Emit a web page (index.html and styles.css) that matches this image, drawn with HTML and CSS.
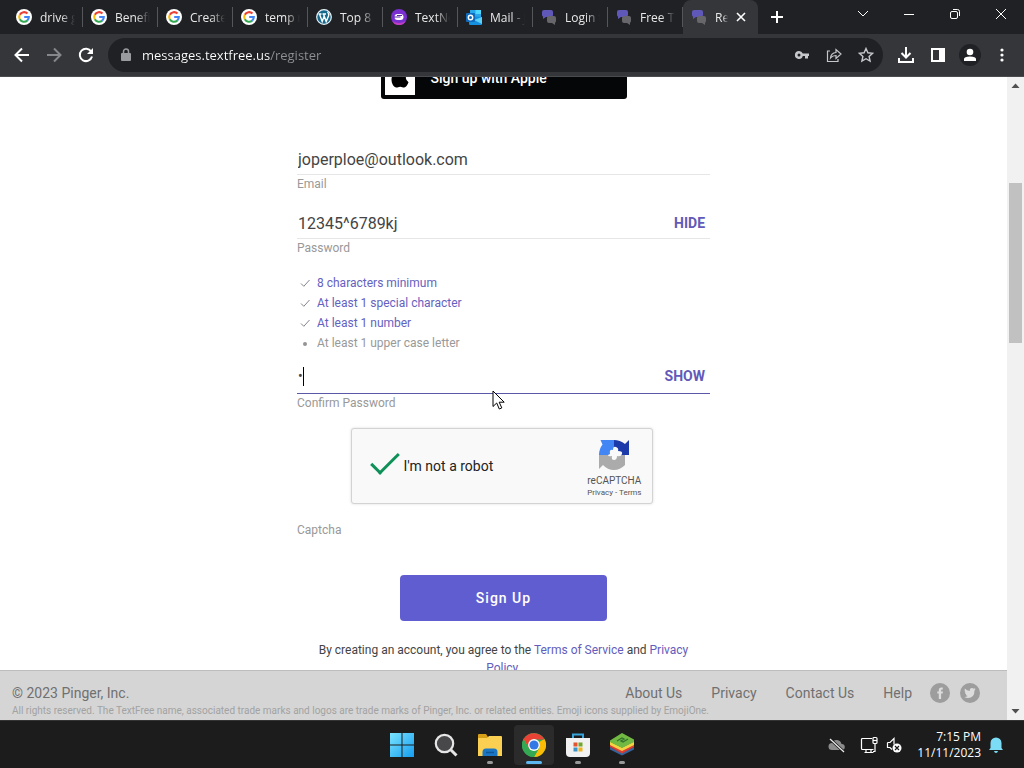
FILE: index.html
```html
<!DOCTYPE html>
<html lang="en">
<head>
  <meta charset="utf-8">
  <title>Register - TextFree</title>
  <link rel="stylesheet" href="styles.css">
</head>
<body>
<svg class="defs" aria-hidden="true">
  <symbol id="google" viewBox="0 0 16 16">
    <circle cx="8" cy="8" r="8" fill="#fff"/>
    <g fill="none" stroke-width="2.1">
      <path d="M11.5 4.6A4.8 4.8 0 0 0 3.8 5.7" stroke="#ea4335"/>
      <path d="M3.8 5.7a4.8 4.8 0 0 0 0 4.6" stroke="#fbbc05"/>
      <path d="M3.8 10.3a4.8 4.8 0 0 0 7.4 1.3" stroke="#34a853"/>
      <path d="M11.2 11.6A4.8 4.8 0 0 0 12.800 8H8.200" stroke="#4285f4"/>
    </g>
  </symbol>
  <symbol id="chat" viewBox="0 0 16 16">
    <path d="M3 1h7a2 2 0 0 1 2 2v3a2 2 0 0 1-2 2H5l-3 2V7.500A2 2 0 0 1 1 6V3a2 2 0 0 1 2-2z" fill="#6058b8"/>
    <path d="M8 7h5a2 2 0 0 1 2 2v3a2 2 0 0 1-1 1.700V16l-3-2H8a2 2 0 0 1-2-2V9a2 2 0 0 1 2-2z" fill="#67676b"/>
  </symbol>
</svg>

<header class="browser">
  <div class="tabs">
    <div class="tab"><svg><use href="#google"/></svg><span>drive google</span></div>
    <div class="tab"><svg><use href="#google"/></svg><span>Benefits of</span></div>
    <div class="tab"><svg><use href="#google"/></svg><span>Create a</span></div>
    <div class="tab"><svg><use href="#google"/></svg><span>temp mail</span></div>
    <div class="tab">
      <svg viewBox="0 0 16 16">
        <circle cx="8" cy="8" r="7.300" fill="#16688c" stroke="#e8f4fa" stroke-width="1.200"/>
        <path d="M2.500 5h3M3.500 5l2.700 7.500L8.200 7M6.500 5h3.500M7.500 5l2.700 7.500L12.500 7q.8-2.500-1-4" fill="none" stroke="#fff" stroke-width="1.400"/>
      </svg>
      <span>Top 8 Sites</span>
    </div>
    <div class="tab">
      <svg viewBox="0 0 16 16">
        <circle cx="8" cy="8" r="8" fill="#7a2fd0"/>
        <path d="M1 12a8 8 0 0 0 14 0Q8 16 1 12z" fill="#c03fc0"/>
        <rect x="3.500" y="5" width="9" height="6" rx="3" fill="#fff"/>
        <path d="M2.500 8h7M6 6.500h5" stroke="#5a23a8"/>
      </svg>
      <span>TextNow</span>
    </div>
    <div class="tab">
      <svg viewBox="0 0 16 16">
        <path d="M4 1h11v7H4z" fill="#28a8ea"/>
        <path d="M9.500 1H15v4H9.500z" fill="#50d9ff"/>
        <path d="M3 7l13 1v7a1 1 0 0 1-1 1H4a1 1 0 0 1-1-1z" fill="#1490df"/>
        <path d="M16 8v7L8 11z" fill="#5bd0f8"/>
        <rect y="4" width="9" height="9" rx="1" fill="#0f6cbd"/>
        <circle cx="4.500" cy="8.500" r="2.200" fill="none" stroke="#fff" stroke-width="1.400"/>
      </svg>
      <span>Mail - Joe</span>
    </div>
    <div class="tab"><svg><use href="#chat"/></svg><span>Login to</span></div>
    <div class="tab"><svg><use href="#chat"/></svg><span>Free Texting</span></div>
    <div class="tab active">
      <svg><use href="#chat"/></svg><span>Register</span>
      <button class="close" aria-label="Close tab"><svg viewBox="0 0 10 10"><path d="M1 1l8 8M9 1l-8 8" stroke="#fff" stroke-width="1.600"/></svg></button>
    </div>
    <button class="new-tab" aria-label="New tab"><svg viewBox="0 0 12 12"><path d="M6 0v12M0 6h12" stroke="#fff" stroke-width="2"/></svg></button>
    <div class="window-controls">
      <button aria-label="Search tabs"><svg viewBox="0 0 12 12"><path d="M1 3l5 5 5-5"/></svg></button>
      <button aria-label="Minimize"><svg viewBox="0 0 12 12"><path d="M1 6.500h10"/></svg></button>
      <button aria-label="Restore"><svg viewBox="0 0 12 12"><rect x="1.500" y="3.500" width="7" height="7" rx="1.500"/><path d="M4 1.500h4.500a2 2 0 0 1 2 2V8"/></svg></button>
      <button aria-label="Close"><svg viewBox="0 0 12 12"><path d="M1 1l10 10M11 1L1 11"/></svg></button>
    </div>
  </div>

  <div class="toolbar">
    <button aria-label="Back"><svg viewBox="0 0 16 16"><path d="M15 8H2M8 1.500L1.500 8 8 14.500" fill="none" stroke="#fff" stroke-width="2"/></svg></button>
    <button aria-label="Forward"><svg viewBox="0 0 16 16"><path d="M1 8h13M8 1.500L14.500 8 8 14.500" fill="none" stroke="#86878a" stroke-width="2"/></svg></button>
    <button aria-label="Reload"><svg viewBox="0 0 16 16"><path d="M13.200 4.500A6.200 6.200 0 1 0 14 9.500" fill="none" stroke="#fff" stroke-width="2"/><path d="M15 1v6H9z" fill="#fff"/></svg></button>
    <div class="omnibox">
      <svg class="lock" viewBox="0 0 10 14"><rect y="5" width="10" height="8" rx="1" fill="#9a9b9e"/><path d="M2.500 5V3.500a2.500 2.500 0 0 1 5 0V5" fill="none" stroke="#9a9b9e" stroke-width="1.500"/></svg>
      <input type="text" aria-label="Address" value="messages.textfree.us/register">
      <button aria-label="Passwords"><svg viewBox="0 0 16 16"><path d="M5 4a4 4 0 1 0 3.800 5H11v2.500h3V9h1V6.500H8.800A4 4 0 0 0 5 4zm0 2.500a1.400 1.400 0 1 1 0 3 1.400 1.400 0 0 1 0-3z" fill="#c6c7ca" fill-rule="evenodd"/></svg></button>
      <button aria-label="Share"><svg viewBox="0 0 16 16"><path d="M4 4H1.500v10.500H12V12M4.500 11q.5-5 5.500-5.500V2.500l5 4.500-5 4.500V8.500Q6.500 8.500 4.500 11z" fill="none" stroke="#c6c7ca" stroke-width="1.200"/></svg></button>
      <button aria-label="Bookmark"><svg viewBox="0 0 16 16"><path d="M8 1.500l1.900 4.300 4.700.5-3.500 3.200 1 4.600L8 11.700l-4.100 2.400 1-4.600L1.400 6.300l4.700-.5z" fill="none" stroke="#c6c7ca" stroke-width="1.400"/></svg></button>
    </div>
    <button aria-label="Downloads"><svg viewBox="0 0 16 16"><path d="M8 0v10M3.500 6L8 10.500 12.500 6M1 11v4h14v-4" fill="none" stroke="#fff" stroke-width="2"/></svg></button>
    <button aria-label="Side panel"><svg viewBox="0 0 16 16"><path d="M1 1h14v14H1zM3 3v10h6V3z" fill="#fff" fill-rule="evenodd"/></svg></button>
    <button class="avatar" aria-label="Profile"><svg viewBox="0 0 22 22"><circle cx="11" cy="11" r="11" fill="#202124"/><circle cx="11" cy="8" r="3.300" fill="#fff"/><path d="M5 17v-2q0-2.500 6-2.500t6 2.500v2z" fill="#fff"/></svg></button>
    <button aria-label="Menu"><svg viewBox="0 0 16 16" fill="#fff"><circle cx="8" cy="3" r="1.600"/><circle cx="8" cy="8" r="1.600"/><circle cx="8" cy="13" r="1.600"/></svg></button>
  </div>
</header>

<div class="viewport">
  <div class="site">
    <main>
      <form class="register">
        <button type="button" class="apple">
          <span class="apple-logo"><svg viewBox="0 0 18 20"><path d="M12.500 0q.2 3-3.500 4.500Q9 1.200 12.500 0zM9 5.800c1 0 2-1 4-.9q2.500.2 3.800 2-4.300 3.200.7 7.300-1.800 5-4.300 5.300c-1.600 0-2.200-.8-4-.8s-2.400.8-3.800.8C2.800 19.500.5 15.500.5 11.500S3 5 5.500 4.900c1.500 0 2.500.9 3.500.9z"/></svg></span>
          Sign up with Apple
        </button>

        <div class="field">
          <input type="email" id="email" value="joperploe@outlook.com">
          <label for="email">Email</label>
        </div>

        <div class="field">
          <div class="row">
            <input type="text" id="password" value="12345^6789kj">
            <button type="button" class="toggle">HIDE</button>
          </div>
          <label for="password">Password</label>
        </div>

        <ul class="rules">
          <li class="ok"><svg viewBox="0 0 10 10"><path d="M1 5.500l2.800 2.800L9.500 2"/></svg>8 characters minimum</li>
          <li class="ok"><svg viewBox="0 0 10 10"><path d="M1 5.500l2.800 2.800L9.500 2"/></svg>At least 1 special character</li>
          <li class="ok"><svg viewBox="0 0 10 10"><path d="M1 5.500l2.800 2.800L9.500 2"/></svg>At least 1 number</li>
          <li><svg viewBox="0 0 10 10"><circle cx="5" cy="6" r="2"/></svg>At least 1 upper case letter</li>
        </ul>

        <div class="field focused">
          <div class="row">
            <input type="password" id="confirm" value="1">
            <span class="caret"></span>
            <button type="button" class="toggle">SHOW</button>
          </div>
          <label for="confirm">Confirm Password</label>
          <svg class="pointer" viewBox="0 0 13 20"><path d="M1 1v15.500l3.700-3.500 2.600 6 2.500-1.100-2.600-5.700h5z" fill="#fff" stroke="#000"/></svg>
        </div>

        <div class="captcha">
          <input type="checkbox" id="robot" checked>
          <label for="robot">I'm not a robot</label>
          <div class="captcha-brand">
            <svg viewBox="0 0 32 32">
              <path d="M31 1v15H16V1q6 0 11 4z" fill="#1c3aa9"/>
              <path d="M16 1v15H1q0-6 3.500-10.500L2.500 1z" fill="#4285f4"/>
              <path d="M1 16h26v10q-5 5-11 5-6.500 0-11-5l-4 4z" fill="#ababab"/>
              <path d="M12 15q-1-5 3-4 0-4 3-3t2 4q5 0 4 3t-5 2q0 4-3 4t-2-4q-4 1-4-1z" fill="#f9f9f9"/>
            </svg>
            <span>reCAPTCHA</span>
            <small><a href="#">Privacy</a> - <a href="#">Terms</a></small>
          </div>
        </div>
        <label class="captcha-label" for="robot">Captcha</label>

        <button type="submit" class="submit">Sign Up</button>
        <p class="terms">By creating an account, you agree to the <a href="#">Terms of Service</a> and <a href="#">Privacy Policy</a>.</p>
      </form>
    </main>

    <footer>
      <div class="footer-row">
        <span>© 2023 Pinger, Inc.</span>
        <nav>
          <a href="#">About Us</a>
          <a href="#">Privacy</a>
          <a href="#">Contact Us</a>
          <a href="#">Help</a>
        </nav>
        <div class="social">
          <a href="#" aria-label="Facebook"><svg viewBox="0 0 20 20"><circle cx="10" cy="10" r="10" fill="#9d9d9d"/><path d="M12.800 4.500h-1.500Q8.800 4.500 8.800 7v1.500H7.300v2h1.500v5.500h2.300v-5.500h1.600l.3-2h-1.900V7.300q0-.8.800-.8h.9z" fill="#dcdcdc"/></svg></a>
          <a href="#" aria-label="Twitter"><svg viewBox="0 0 20 20"><circle cx="10" cy="10" r="10" fill="#9d9d9d"/><path d="M4.800 5.500q2 2.300 5 2.500Q9.500 5 12 5q1 0 1.800.7l1.600-.6-.9 1.400 1.200-.2-1.200 1.300Q14.500 15 8 15q-2 0-3.600-1 1.800.1 3.300-1-1.600-.2-2-1.500h.8q-1.700-.6-1.700-2.200l.9.300Q4 8 4.800 5.500z" fill="#dcdcdc"/></svg></a>
        </div>
      </div>
      <p>All rights reserved. The TextFree name, associated trade marks and logos are trade marks of Pinger, Inc. or related entities. Emoji icons supplied by EmojiOne.</p>
    </footer>
  </div>

  <div class="scrollbar">
    <svg viewBox="0 0 17 17"><path d="M4.500 11h8l-4-4.500z"/></svg>
    <div class="track"><div class="thumb"></div></div>
    <svg viewBox="0 0 17 17"><path d="M4.500 6h8l-4 4.500z"/></svg>
  </div>
</div>

<div class="taskbar">
  <div class="apps">
    <button aria-label="Start"><svg viewBox="0 0 24 24"><defs><linearGradient id="win" x2="1" y2="1"><stop stop-color="#7be4ff"/><stop offset="1" stop-color="#159df0"/></linearGradient></defs><path d="M0 0h11.500v11.500H0zM12.500 0H24v11.500H12.500zM0 12.500h11.500V24H0zM12.500 12.500H24V24H12.500z" fill="url(#win)"/></svg></button>
    <button aria-label="Search"><svg viewBox="0 0 24 24"><circle cx="10.500" cy="10.500" r="8.700" fill="#48484a" stroke="#e6e6e6" stroke-width="2.200"/><path d="M17 17l5.500 5.500" stroke="#e6e6e6" stroke-width="3"/></svg></button>
    <button class="running" aria-label="File Explorer"><svg viewBox="0 0 24 24"><path d="M0 2a1 1 0 0 1 1-1h7l2 3v4H0z" fill="#d79f17"/><path d="M0 5h9l2-2h12a1 1 0 0 1 1 1v19H0z" fill="#fbd052"/><path d="M4.500 23v-4a3.500 3.500 0 0 1 3.500-3.500h8a3.500 3.500 0 0 1 3.500 3.500v4z" fill="#1a76c4"/><path d="M8 19.500h8" stroke="#0d5595" stroke-width="1.500"/></svg></button>
    <button class="running current" aria-label="Chrome"><svg viewBox="0 0 24 24"><circle cx="12" cy="12" r="12" fill="#34a853"/><path d="M1.600 6L7 15.200 12 12 22.400 6A12 12 0 0 1 12 24l5-9 .4-6z" fill="#fbbc05"/><path d="M1.600 6A12 12 0 0 0 12 24l5.200-9-5.200-3-5 2.500z" fill="#34a853"/><path d="M1.600 6A12 12 0 0 1 22.400 6.500H12L7 14.800z" fill="#ea4335"/><circle cx="12" cy="12" r="5.900" fill="#fff"/><circle cx="12" cy="12" r="4.600" fill="#3478e5"/></svg></button>
    <button class="running" aria-label="Microsoft Store"><svg viewBox="0 0 24 24"><path d="M7 6V1.500h10V6" fill="none" stroke="#35a5dc" stroke-width="2"/><path d="M0 5h24v15a4 4 0 0 1-4 4H4a4 4 0 0 1-4-4z" fill="#f1f1f1"/><path d="M7.500 9.500h4v4h-4z" fill="#e2532f"/><path d="M12.500 9.500h4v4h-4z" fill="#72a62c"/><path d="M7.500 14.500h4v4h-4z" fill="#3a92c8"/><path d="M12.500 14.500h4v4h-4z" fill="#efb420"/></svg></button>
    <button class="running" aria-label="BlueStacks"><svg viewBox="0 0 24 24"><path d="M0 14l12 6 12-6v2.500l-12 6-12-6z" fill="#35649c"/><path d="M0 11l12 6 12-6v3l-12 6.500L0 14z" fill="#dc4034"/><path d="M0 8.500l12 6 12-6V12l-12 6-12-6z" fill="#f2d443"/><path d="M0 7.500L12 0l12 6.500v2.500l-12 6-12-6z" fill="#72b944"/><path d="M7 8l5-3 2 1-3 2 2 1 5-3" fill="none" stroke="#33702c" stroke-width="1.300"/></svg></button>
  </div>
  <div class="tray">
    <svg viewBox="0 0 18 18"><path d="M4 14a3.500 3.500 0 0 1 0-7 5 5 0 0 1 9.500 1A3 3 0 0 1 14 14z" fill="#8c8c8c"/><path d="M2 3l14 13" stroke="#1c1c1c" stroke-width="3"/><path d="M2 3l14 13" stroke="#eee" stroke-width="1.200"/></svg>
    <svg class="network" viewBox="0 0 18 18" fill="none" stroke="#fff" stroke-width="1.200"><path d="M12 2.500H2.500a1 1 0 0 0-1 1v9a1 1 0 0 0 1 1h11M4.500 16.500h9M6 14v2.500M11 14v2.500M15 7.500v8H13"/><rect x="13" y="1.500" width="4" height="6" rx="1"/><path d="M13 4.500h4"/></svg>
    <svg viewBox="0 0 18 18"><path d="M2.500 6.500h2.500l4-4v6M2.500 6.500v5h2.500l2 2" fill="none" stroke="#fff" stroke-width="1.200"/><circle cx="12" cy="12" r="4.500" fill="#fff"/><path d="M10 10l4 4M14 10l-4 4" stroke="#1c1c1c" stroke-width="1.200"/></svg>
    <div class="clock">7:15 PM<br>11/11/2023</div>
    <svg viewBox="0 0 18 18"><path d="M3.500 12V7a5.500 5.500 0 0 1 11 0v5l1.500 2H2zM7 15h4q-.5 2-2 2t-2-2z" fill="#7ddcf5"/></svg>
  </div>
</div>
</body>
</html>
```
FILE: styles.css
```css
* {
  box-sizing: border-box;
}

body {
  margin: 0;
  height: 100vh;
  display: flex;
  flex-direction: column;
  overflow: hidden;
  font-family: Roboto, "Liberation Sans", sans-serif;
  color: #444;
}

button {
  padding: 0;
  border: 0;
  background: none;
  font-family: inherit;
}

input {
  font-family: inherit;
}

a {
  color: inherit;
  text-decoration: none;
}

svg {
  flex: none;
  display: block;
}

.defs {
  display: none;
}

/* browser window */
.browser {
  flex: none;
  background: #202124;
  color: #e8e8e8;
  font-family: "Open Sans", sans-serif;
}

.tabs {
  display: flex;
  height: 34px;
  padding-left: 8px;
}

.tab {
  flex: 0 1 75px;
  min-width: 0;
  display: flex;
  align-items: center;
  gap: 8px;
  padding: 0 8px;
  font-size: 12px;
  background: linear-gradient(#55565a, #55565a) right center / 1px 20px no-repeat;
}

.tab svg {
  width: 16px;
  height: 16px;
}

.tab span {
  flex: 1;
  min-width: 0;
  overflow: hidden;
  white-space: nowrap;
  -webkit-mask-image: linear-gradient(to right, #000 60%, transparent);
  mask-image: linear-gradient(to right, #000 60%, transparent);
}

.tab.active {
  padding-right: 12px;
  border-radius: 8px 8px 0 0;
  background: #35363a;
}

.close svg {
  width: 10px;
  height: 10px;
}

.new-tab {
  width: 38px;
}

.new-tab svg {
  width: 12px;
  height: 12px;
  margin: 0 auto;
}

.window-controls {
  flex: none;
  display: flex;
  margin-left: auto;
}

.window-controls button {
  width: 46px;
  padding-bottom: 6px;
}

.window-controls svg {
  width: 12px;
  height: 12px;
  margin: 0 auto;
  fill: none;
  stroke: #fff;
}

.toolbar {
  display: flex;
  align-items: center;
  height: 43px;
  padding: 0 6px;
  background: #35363a;
  border-bottom: 1px solid #4a4b4e;
}

.toolbar button {
  flex: none;
  width: 32px;
}

.toolbar svg {
  width: 16px;
  height: 16px;
  margin: 0 auto;
}

.toolbar .avatar svg {
  width: 22px;
  height: 22px;
}

.omnibox {
  flex: 1;
  display: flex;
  align-items: center;
  height: 34px;
  margin: 0 7px 0 6px;
  padding: 0 1px 0 13px;
  border-radius: 17px;
  background: #202124;
}

.omnibox .lock {
  width: 10px;
  height: 14px;
  margin: 0 11px 0 0;
}

/* host in white, path in grey */
.omnibox input {
  flex: 1;
  min-width: 0;
  padding: 0;
  border: 0;
  font-size: 13px;
  line-height: 20px;
  color: transparent;
  background: linear-gradient(to right, #fff 128px, #8f9094 128px);
  -webkit-background-clip: text;
  background-clip: text;
}

/* page */
.viewport {
  flex: 1;
  min-height: 0;
  display: flex;
}

.site {
  flex: 1;
  min-width: 0;
  display: flex;
  flex-direction: column;
  background: #fff;
}

main {
  flex: 1;
  min-height: 0;
  overflow: hidden;
}

.register {
  display: flex;
  flex-direction: column;
  max-width: 413px;
  margin: -20px auto 0;
}

.apple {
  display: flex;
  align-items: center;
  align-self: center;
  gap: 16px;
  width: 246px;
  height: 42px;
  margin-bottom: 45px;
  padding: 4px;
  border-radius: 3px;
  background: #050607;
  color: #fff;
  font-size: 14px;
  font-weight: 500;
}

.apple-logo {
  display: flex;
  align-items: center;
  justify-content: center;
  width: 30px;
  height: 34px;
  background: #fff;
}

.apple-logo svg {
  width: 18px;
  height: 20px;
}

.field {
  position: relative;
  margin-bottom: 15px;
}

.row {
  position: relative;
  display: flex;
}

.field input {
  display: block;
  width: 100%;
  height: 31px;
  padding: 0 1px;
  border: 0;
  border-bottom: 1px solid #e6e6e6;
  outline: 0;
  background: none;
  color: #444;
  font-size: 16px;
}

.field label,
.captcha-label {
  display: block;
  font-size: 12px;
  line-height: 18px;
  color: #999;
}

.field.focused input {
  height: 33px;
  padding-bottom: 2px;
  border-bottom-color: #5b58a8;
  font-size: 14px;
}

.toggle {
  position: absolute;
  top: 0;
  right: 5px;
  height: 30px;
  color: #6259b8;
  font-size: 14px;
  font-weight: 700;
}

.caret {
  position: absolute;
  left: 6px;
  top: 6px;
  width: 1px;
  height: 19px;
  background: #000;
}

.pointer {
  position: absolute;
  left: 195px;
  top: 29px;
  width: 13px;
  height: 20px;
}

.rules {
  margin: 1px 0 8px;
  padding: 0 0 0 3px;
  list-style: none;
  font-size: 12px;
  line-height: 20px;
  color: #999;
}

.rules li {
  display: flex;
  align-items: center;
  gap: 7px;
}

.rules svg {
  width: 10px;
  height: 10px;
  fill: #949494;
}

.rules .ok {
  color: #6561c0;
}

.rules .ok svg {
  fill: none;
  stroke: #84848c;
}

.captcha {
  display: flex;
  align-items: center;
  align-self: center;
  width: 302px;
  height: 76px;
  margin: 1px 4px 17px 0;
  padding: 0 10px 0 16px;
  border: 1px solid #d3d3d3;
  border-radius: 3px;
  background: #f9f9f9;
  box-shadow: 0 0 3px #ddd;
}

.captcha input {
  appearance: none;
  width: 28px;
  height: 28px;
  margin: 0;
}

.captcha input:checked::before {
  content: "";
  display: block;
  width: 11px;
  height: 25px;
  margin: -6px 0 0 10px;
  border: solid #0f9058;
  border-width: 0 3px 3px 0;
  transform: rotate(45deg);
}

.captcha label {
  flex: 1;
  margin-left: 8px;
  font-size: 14px;
  color: #222;
}

.captcha-brand {
  display: flex;
  flex-direction: column;
  align-items: center;
  padding-top: 5px;
  color: #555;
  font-size: 10px;
  line-height: 12px;
}

.captcha-brand svg {
  width: 32px;
  height: 32px;
  margin-bottom: 4px;
}

.captcha-brand small {
  font-size: 8px;
}

.submit {
  align-self: center;
  width: 207px;
  height: 46px;
  margin-top: 36px;
  border-radius: 4px;
  background: #605dd0;
  color: #fff;
  font-size: 14px;
  font-weight: 500;
  letter-spacing: 1px;
}

.terms {
  margin: 20px 0 0;
  padding: 0 8px;
  font-size: 12px;
  line-height: 18px;
  text-align: center;
}

.terms a {
  color: #625dbd;
}

footer {
  flex: none;
  height: 50px;
  padding: 12px 27px 0 12px;
  border-top: 1px solid #bdbdbd;
  background: #d5d5d5;
  color: #707070;
}

.footer-row {
  display: flex;
  align-items: center;
  height: 20px;
  font-size: 14px;
}

nav {
  display: flex;
  gap: 29px;
  margin-left: auto;
}

.social {
  display: flex;
  gap: 10px;
  margin-left: 18px;
}

.social svg {
  width: 20px;
  height: 20px;
}

footer p {
  margin: 2px 0 0;
  font-size: 10px;
  line-height: 12px;
  color: #a2a2a2;
}

.scrollbar {
  flex: 0 0 17px;
  display: flex;
  flex-direction: column;
  background: #f1f1f1;
}

.scrollbar svg {
  width: 17px;
  height: 17px;
  fill: #505050;
}

.track {
  flex: 1;
  padding: 89px 2px 0;
}

.thumb {
  height: 160px;
  background: #c1c1c1;
}

/* taskbar */
.taskbar {
  flex: none;
  display: grid;
  grid-template-columns: 1fr auto 1fr;
  height: 48px;
  background: #1c1c1c;
  border-top: 1px solid #333;
}

.apps {
  grid-column: 2;
  display: flex;
  align-items: center;
  gap: 4px;
}

.apps button {
  position: relative;
  width: 40px;
  height: 40px;
  border-radius: 4px;
}

.apps svg {
  width: 24px;
  height: 24px;
  margin: 0 auto;
}

.apps .current {
  background: #2b2b2b;
}

.running::after {
  content: "";
  position: absolute;
  left: 17px;
  bottom: 1px;
  width: 6px;
  height: 3px;
  border-radius: 2px;
  background: #999;
}

.running.current::after {
  left: 12px;
  width: 16px;
  background: #5cb8ee;
}

.tray {
  display: flex;
  align-items: center;
  justify-content: flex-end;
  padding-right: 19px;
  color: #fff;
  font-family: "Open Sans", sans-serif;
  font-size: 12px;
  line-height: 16px;
}

.tray svg {
  width: 18px;
  height: 18px;
}

.tray .network {
  margin: 0 7px 0 14px;
}

.clock {
  margin: 0 6px 0 14px;
  text-align: right;
}
```
